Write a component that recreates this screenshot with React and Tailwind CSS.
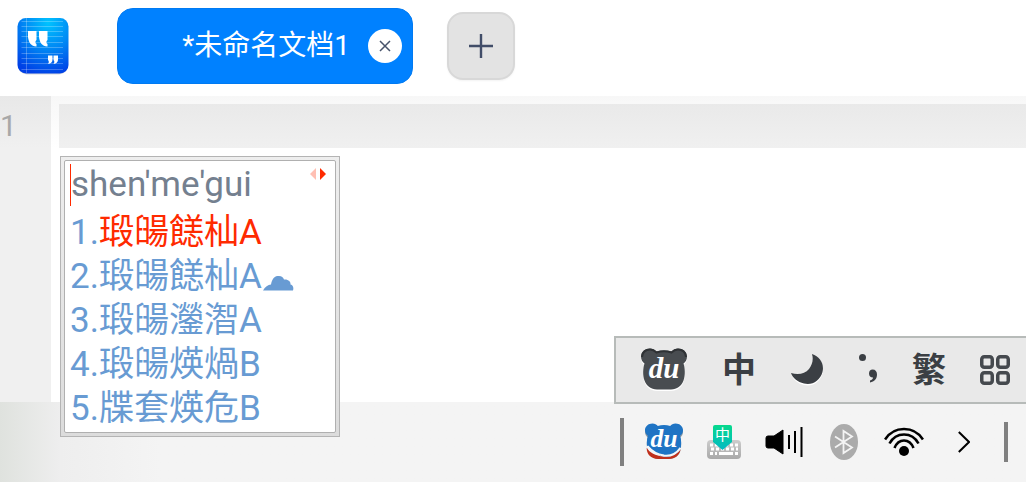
import React from "react";
import { clsx } from "clsx";

const candidates = [
  { text: "瑖䑗䭐杣A", active: true },
  { text: "瑖䑗䭐杣A", cloud: true },
  { text: "瑖䑗灐潪A" },
  { text: "瑖䑗煐煱B" },
  { text: "牒套煐危B" },
];

const NotepadLogo = () => (
  <svg width="52" height="58" viewBox="0 0 52 58" className="shrink-0" aria-hidden="true">
    <defs>
      <radialGradient id="logo-bg" cx="0.6" cy="0.08" r="0.95">
        <stop offset="0" stopColor="#00c3ff" />
        <stop offset="0.5" stopColor="#0088f4" />
        <stop offset="1" stopColor="#0040e6" />
      </radialGradient>
    </defs>
    <rect x="1" y="2.5" width="50" height="55" rx="9" fill="#000" opacity="0.15" />
    <rect x="0.5" y="1" width="51" height="55.500" rx="8.500" fill="url(#logo-bg)" />
    <path
      d="M4.500 4.500H46M4.500 9.500H46M4.500 14.500H46M4.500 19.500H46M4.500 25.500H46M4.500 30.500H46M4.500 36.500H46M4.500 41.500H46M4.500 46.500H46M4.500 52.500H46M9.500 1V56"
      stroke="#fff"
      strokeOpacity="0.25"
      fill="none"
    />
    <path
      d="M11 14h8.500v9c-1.500 1.500-1.500 3 0 4v2.500C14 29.500 11.500 25 11 20zM22 14h8.500v9c-1.500 1.500-1.500 3 0 4v2.500C25 29.500 22.500 25 22 20zM31 38.500h4.500v4c0 2.500-1.500 4-4.500 4.500 1-1.500 1.200-2.500 0-4zM36.500 38.500H41v4c0 2.500-1.500 4-4.500 4.500 1-1.500 1.200-2.500 0-4z"
      fill="#fff"
    />
  </svg>
);

const BearHead = ({ fill }) => (
  <path
    d="M10 0.500C13 0.500 15 2 16.500 3.500C21 2.200 27 2.200 31.500 3.500C33 2 35 0.500 38 0.500C43 0.500 47 4 47 8.500C47 12 45.500 14 43.500 15.500C45 20 45.500 27 43.500 32.500C41.500 38 37 41 31 41.500H17C11 41 6.500 38 4.500 32.500C2.500 27 3 20 4.500 15.500C2.500 14 1 12 1 8.500C1 4 5 0.500 10 0.500Z"
    fill={fill}
  />
);

const DuText = ({ y, size }) => (
  <text
    x="24"
    y={y}
    textAnchor="middle"
    fill="#fff"
    fontSize={size}
    fontWeight="700"
    fontStyle="italic"
    fontFamily="'Liberation Serif', serif"
  >
    du
  </text>
);

const DuDark = () => (
  <svg width="48" height="44" viewBox="0 0 48 44" aria-hidden="true">
    <g transform="translate(0 1.500)">
      <BearHead fill="#fff" />
    </g>
    <BearHead fill="#484c50" />
    <path
      d="M2 9C2 4 6 1.500 10 1.500C13 1.500 15 3 16.500 4.500C21 3 27 3 31.500 4.500C33 3 35 1.500 38 1.500C42 1.500 46 4 46 9"
      fill="none"
      stroke="#2f3235"
      strokeWidth="2"
    />
    <DuText y="30" size="29" />
  </svg>
);

const DuColor = () => (
  <svg width="40" height="38" viewBox="0 0 48 46" aria-hidden="true">
    <g transform="translate(0 2)">
      <BearHead fill="#8d9aa3" />
    </g>
    <BearHead fill="#1f74c4" />
    <path d="M3 27C9 32 14 37 20 40L30 42H17C9 42 4 37 3 27Z" fill="#f4f6f8" />
    <path d="M3 30C7 36 13 40 24 40.500C32 42 39 38 44 32C43 39 37 43.500 30 43.500H17C8 43.500 3 38 3 30Z" fill="#c0301c" />
    <path d="M4 28C9 34 15 38 24 39.500C32 40.500 39 37 44 30" fill="none" stroke="#f4f6f8" strokeWidth="2.500" />
    <DuText y="29" size="31" />
  </svg>
);

const Moon = () => (
  <svg width="34" height="34" viewBox="0 0 34 34" aria-hidden="true">
    <path
      d="M22 2.500C30 5 34.500 13 32.500 20.500C30 29.500 22 34 14 32C7.500 30.500 3 26.500 1.500 21.500C8 23.500 15 22.500 19 17.500C22.500 13 23.500 8 22 2.500Z"
      fill="#fff"
    />
    <path
      d="M22 1C30 3.500 34.500 11 32.500 19C30 28 22 32.500 14 30.500C7.500 29 2.500 25 1 20C8 22 15 21 19 16C22.500 11.500 23.500 6.500 22 1Z"
      fill="#3b3f44"
    />
  </svg>
);

const Punctuation = () => (
  <svg width="20" height="34" viewBox="0 0 20 34" aria-hidden="true">
    <circle cx="4.500" cy="4.500" r="3.500" fill="#3b3f44" />
    <path
      d="M14.500 16.500C17.500 16.500 19 18.500 19 21.500C19 26 16.500 28.500 12 29.500V27.500C14 26.800 15 25.800 15 24.500C12.500 24.500 11 23 11 20.500C11 18 12.500 16.500 14.500 16.500Z"
      fill="#3b3f44"
    />
  </svg>
);

const Grid = () => (
  <svg width="30" height="30" viewBox="0 0 30 30" fill="none" stroke="#45494e" strokeWidth="3.500" aria-hidden="true">
    <rect x="1.750" y="1.750" width="10.500" height="10.500" rx="2.500" />
    <rect x="17.750" y="1.750" width="10.500" height="10.500" rx="2.500" />
    <rect x="1.750" y="17.750" width="10.500" height="10.500" rx="2.500" />
    <rect x="17.750" y="17.750" width="10.500" height="10.500" rx="2.500" />
  </svg>
);

const KeyboardIcon = () => (
  <svg width="36" height="36" viewBox="0 0 36 36" aria-hidden="true">
    <defs>
      <linearGradient id="kb-body" x2="0" y2="1">
        <stop offset="0" stopColor="#cdcdcd" />
        <stop offset="1" stopColor="#a9a9a9" />
      </linearGradient>
      <linearGradient id="kb-tag" x2="0" y2="1">
        <stop offset="0" stopColor="#06d98c" />
        <stop offset="1" stopColor="#03b9c4" />
      </linearGradient>
    </defs>
    <rect x="1" y="16" width="34" height="19" rx="4" fill="url(#kb-body)" />
    <path
      d="M4 21h3M9 21h3M14 21h3M19 21h3M24 21h3M29 21h3M5 25h3M10 25h3M15 25h3M20 25h3M25 25h3M30 25h2M4 29.500h3M9 29.500h2M13 29.500h14M29 29.500h3"
      stroke="#fff"
      strokeWidth="3"
      fill="none"
    />
    <path d="M9 1H24a2 2 0 0 1 2 2V18L16.500 26L7 18V3a2 2 0 0 1 2-2Z" fill="url(#kb-tag)" />
    <text x="16.500" y="16" textAnchor="middle" fill="#fff" fontSize="15" fontFamily="'Noto Sans CJK SC', sans-serif">
      中
    </text>
  </svg>
);

const Speaker = () => (
  <svg width="38" height="32" viewBox="0 0 38 32" aria-hidden="true">
    <path d="M3 10H9L18 4V28L9 22H3Q1 22 1 20V12Q1 10 3 10Z" fill="#000" stroke="#000" strokeLinejoin="round" />
    <path d="M24 9V23M30 5V27M36.500 1V31" stroke="#000" strokeWidth="2" fill="none" />
  </svg>
);

const Bluetooth = () => (
  <svg width="28" height="36" viewBox="0 0 28 36" aria-hidden="true">
    <ellipse cx="14" cy="18" rx="14" ry="18" fill="#ababab" />
    <path d="M5 12.500L22 23.500L13.500 29V7L22 12.500L5 23.500" fill="none" stroke="#f4f4f4" strokeWidth="1.800" />
  </svg>
);

const Wifi = () => (
  <svg width="40" height="30" viewBox="0 0 40 30" aria-hidden="true">
    <path
      d="M1 12.500C10 -1.500 30 -1.500 39 12.500M5.500 16.500C12 4.500 28 4.500 34.500 16.500M10.500 21C14.500 11 25.500 11 29.500 21"
      fill="none"
      stroke="#000"
      strokeWidth="2.600"
    />
    <circle cx="20" cy="24" r="5" fill="#000" />
  </svg>
);

const Chevron = () => (
  <svg width="12" height="22" viewBox="0 0 12 22" fill="none" stroke="#000" strokeWidth="2" aria-hidden="true">
    <path d="M0.800 1L11 11L0.800 21" />
  </svg>
);

const Cloud = () => (
  <svg width="32" height="16" viewBox="0 0 32 16" fill="#689bd3" className="mt-3" aria-hidden="true">
    <path d="M1 15.500C3 12 6 9.500 9 9.500C10 5 11.500 1.500 15.500 1C19.500 0.500 21 2 22 4.500C26 4 29 6.500 28.500 9.500C31 10 32 13 31 15.500Z" />
  </svg>
);

const Pager = () => (
  <svg width="16" height="12" viewBox="0 0 16 12" aria-hidden="true">
    <path d="M6 0V12L0 6Z" fill="#ffbfb3" />
    <path d="M10 0V12L16 6Z" fill="#ff2a00" />
  </svg>
);

const toolbarItems = [
  { label: "百度输入法", icon: <DuDark /> },
  { label: "中文", icon: "中" },
  { label: "半角", icon: <Moon /> },
  { label: "标点", icon: <Punctuation /> },
  { label: "繁体", icon: "繁" },
  { label: "菜单", icon: <Grid /> },
];

const trayItems = [
  { label: "百度输入法", icon: <DuColor /> },
  { label: "键盘", icon: <KeyboardIcon /> },
  { label: "音量", icon: <Speaker /> },
  { label: "蓝牙", icon: <Bluetooth /> },
  { label: "无线网络", icon: <Wifi /> },
  { label: "展开", icon: <Chevron /> },
];

const TitleBar = () => (
  <header className="flex h-24 items-start bg-white pl-[17px] pt-2">
    <div className="flex h-[76px] items-center">
      <NotepadLogo />
      <div className="ml-12 flex h-[76px] w-[296px] items-center justify-end gap-[18px] rounded-2xl border border-[#007af2] bg-[#0081ff] pr-[10px]">
        <span className="text-[28px] leading-9 text-white">*未命名文档1</span>
        <button
          aria-label="关闭标签"
          className="flex h-[34px] w-[34px] items-center justify-center rounded-full bg-white"
        >
          <svg width="12" height="12" viewBox="0 0 12 12" stroke="#47536b" strokeWidth="1.500" aria-hidden="true">
            <path d="M1 1L11 11M11 1L1 11" />
          </svg>
        </button>
      </div>
      <button
        aria-label="新建标签"
        className="ml-[34px] flex h-[68px] w-[68px] items-center justify-center rounded-2xl border-2 border-[#d8d8d8] bg-[#e3e3e3] shadow-xs"
      >
        <svg width="24" height="24" viewBox="0 0 24 24" stroke="#414d68" strokeWidth="2.400" aria-hidden="true">
          <path d="M12 0V24M0 12H24" />
        </svg>
      </button>
    </div>
  </header>
);

const Editor = () => (
  <main className="flex flex-1 bg-linear-to-b from-[#f7f7f7] to-white to-[52px]">
    <div className="w-[51px] bg-black/6 pt-2 text-[30px] leading-11 text-[#a8a8a8]">1</div>
    <div className="flex-1 pl-2 pt-2">
      <textarea aria-label="文档内容" rows={1} className="block h-11 w-full resize-none bg-black/6 outline-none" />
    </div>
  </main>
);

const CandidateWindow = () => (
  <section
    aria-label="候选词"
    className="absolute left-[60px] top-[156px] w-[280px] border border-[#b4b4b4] bg-linear-to-b from-[#eeeeee] to-[#dcdcdc] p-[3px]"
  >
    <div className="rounded-xs border border-[#b0b0b0] bg-white pb-px pl-[5px] pr-[9px] text-[35px] text-[#689bd3]">
      <div className="flex h-[50px] items-start gap-2 pt-[3px]">
        <input
          aria-label="拼音"
          readOnly
          value="shen'me'gui"
          className="h-[42px] min-w-0 flex-1 border-l border-[#ff2a00] text-[#74808f] outline-none"
        />
        <span className="pt-1">
          <Pager />
        </span>
      </div>
      <ol>
        {candidates.map((item, index) => (
          <li key={index}>
            <button className="flex h-11 w-full items-center leading-11">
              <span>{index + 1}.</span>
              <span className={clsx(item.active && "text-[#ff2a00]")}>{item.text}</span>
              {item.cloud && <Cloud />}
            </button>
          </li>
        ))}
      </ol>
    </div>
  </section>
);

const ImeToolbar = () => (
  <div
    role="toolbar"
    aria-label="输入法工具栏"
    className="absolute bottom-[78px] right-0 flex h-[68px] items-center gap-[34px] border-y-2 border-l-2 border-[#b7bbb9] bg-[#e9e9e9] pl-6 pr-4"
  >
    {toolbarItems.map((item) => (
      <button key={item.label} aria-label={item.label} className="text-[34px] font-bold leading-11 text-[#3b3f44]">
        {item.icon}
      </button>
    ))}
  </div>
);

const Taskbar = () => (
  <footer className="flex h-20 items-center justify-end gap-5 bg-linear-to-r from-[#dfe2de] via-[#eeeeee] via-[60px] to-[#f4f4f4] to-[160px] pr-[18px]">
    <span className="h-12 w-1 bg-[#808080]" />
    {trayItems.map((item) => (
      <button key={item.label} aria-label={item.label} className="flex w-10 items-center justify-center">
        {item.icon}
      </button>
    ))}
    <span className="h-10 w-1 bg-[#808080]" />
  </footer>
);

const App = () => {
  return (
    <div className="relative flex min-h-screen flex-col overflow-hidden bg-white font-[Roboto,'Noto_Sans_CJK_SC',sans-serif]">
      <TitleBar />
      <Editor />
      <Taskbar />
      <CandidateWindow />
      <ImeToolbar />
    </div>
  );
};

export default App;
